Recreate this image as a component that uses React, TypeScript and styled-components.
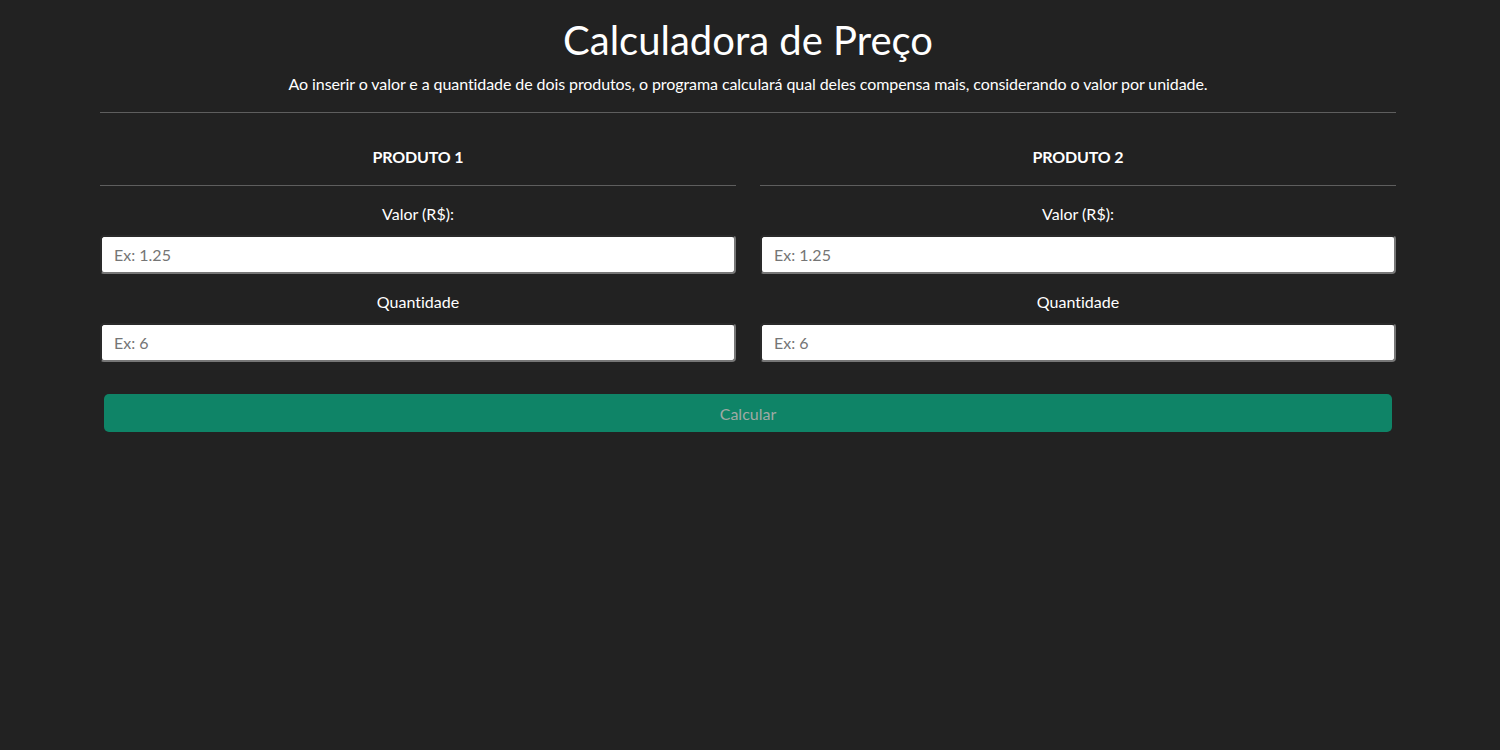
import React from "react";
import styled, { createGlobalStyle } from "styled-components";

const GlobalStyle = createGlobalStyle`
  html, body {
    margin: 0;
    padding: 0;
    background: #222222;
  }
  body {
    font-family: Lato, "Open Sans", sans-serif;
    font-variant-ligatures: none;
    color: #ffffff;
  }
  * { box-sizing: border-box; }
`;

const Page = styled.main`
  min-height: 750px;
  padding: 16px 104px 0 100px;
  display: flex;
  flex-direction: column;
`;

const Title = styled.h1`
  margin: 0 0 8px;
  font-size: 40px;
  font-weight: 400;
  line-height: 48px;
  text-align: center;
  color: #ffffff;
`;

const Subtitle = styled.p`
  margin: 0;
  font-size: 16px;
  line-height: 24px;
  letter-spacing: -0.085px;
  text-align: center;
`;

const Rule = styled.hr<{ $gap?: number }>`
  margin: ${(p) => p.$gap ?? 16}px 0 0;
  border: 0;
  height: 1px;
  background: #5e5e5e;
`;

const Columns = styled.section`
  display: grid;
  grid-template-columns: 1fr 1fr;
  column-gap: 24px;
  margin-top: 32px;
`;

const Column = styled.div`
  display: flex;
  flex-direction: column;
`;

const ProductTitle = styled.h2`
  margin: 0;
  font-size: 16px;
  line-height: 24px;
  font-weight: 700;
  letter-spacing: -0.15px;
  text-align: center;
  text-transform: uppercase;
`;

const Field = styled.label`
  display: flex;
  flex-direction: column;
  gap: 9px;
  margin-top: 16px;
`;

const FieldLabel = styled.span`
  font-size: 16px;
  line-height: 24px;
  text-align: center;
`;

const Input = styled.input`
  width: 100%;
  height: 39px;
  padding: 0 12px;
  font-family: Lato, "Open Sans", sans-serif;
  font-size: 16px;
  color: #212529;
  background: #ffffff;
  border-width: 2px;
  border-style: solid;
  border-color: #2a2a2a #777777 #777777 #2a2a2a;
  border-radius: 4px;
  outline: none;
  &::placeholder {
    color: #757575;
  }
`;

const Button = styled.button`
  margin: 32px 4px 0;
  height: 38px;
  border: 0;
  border-radius: 5px;
  background: #0f8467;
  color: #a0aaa5;
  font-family: Lato, "Open Sans", sans-serif;
  font-size: 16px;
  cursor: pointer;
`;

const products = ["Produto 1", "Produto 2"];

export default function App() {
  return (
    <>
      <GlobalStyle />
      <Page>
        <Title>Calculadora de Preço</Title>
        <Subtitle>
          Ao inserir o valor e a quantidade de dois produtos, o programa calculará qual deles
          compensa mais, considerando o valor por unidade.
        </Subtitle>
        <Rule />
        <Columns>
          {products.map((p) => (
            <Column key={p}>
              <ProductTitle>{p}</ProductTitle>
              <Rule $gap={16} />
              <Field>
                <FieldLabel>Valor (R$):</FieldLabel>
                <Input type="text" placeholder="Ex: 1.25" />
              </Field>
              <Field>
                <FieldLabel>Quantidade</FieldLabel>
                <Input type="text" placeholder="Ex: 6" />
              </Field>
            </Column>
          ))}
        </Columns>
        <Button disabled>Calcular</Button>
      </Page>
    </>
  );
}
